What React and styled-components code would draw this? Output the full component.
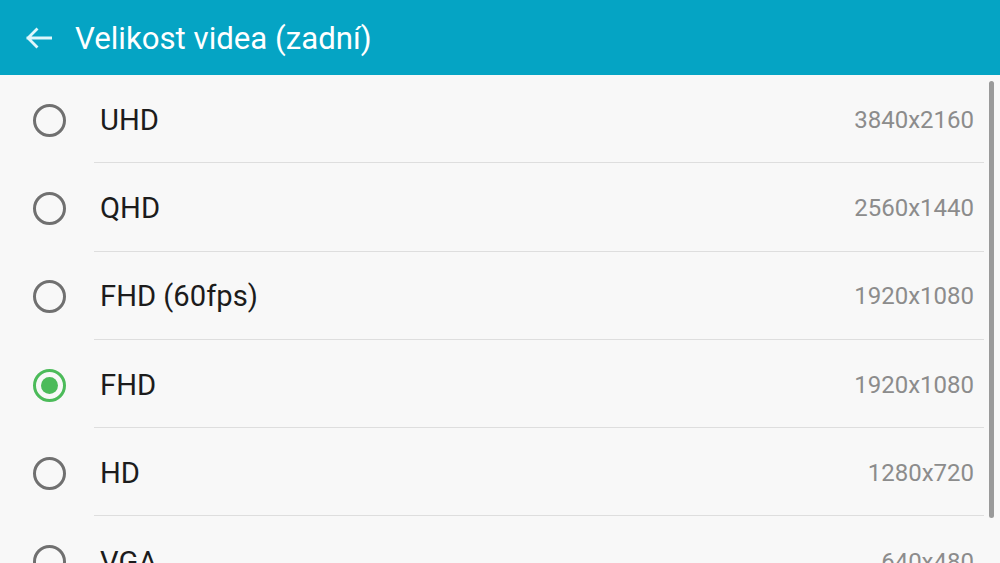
import React from "react";
import styled, { createGlobalStyle } from "styled-components";

const Global = createGlobalStyle`
  html, body { margin: 0; padding: 0; }
  body {
    width: 1000px;
    height: 563px;
    overflow: hidden;
    background: #f8f8f8;
    font-family: Roboto, "Noto Sans", sans-serif;
  }
`;

const Screen = styled.div`
  position: relative;
  width: 1000px;
  height: 563px;
  overflow: hidden;
  background: #f8f8f8;
  display: flex;
  flex-direction: column;
`;

const Header = styled.header`
  height: 75px;
  flex: none;
  background: #05a4c4;
  display: flex;
  align-items: center;
  padding-left: 24px;
  box-sizing: border-box;
`;

const BackButton = styled.div`
  width: 28px;
  height: 28px;
  display: flex;
  align-items: center;
  justify-content: center;
  margin-right: 23px;
`;

const Title = styled.h1`
  margin: 0;
  font-size: 31.2px;
  font-weight: 400;
  color: #ffffff;
  margin-top: 2px;
`;

const List = styled.div`
  display: flex;
  flex-direction: column;
`;

const Row = styled.div`
  height: 88.3px;
  display: flex;
  align-items: stretch;
  padding-right: 16px;
  box-sizing: border-box;
  flex: none;
`;

const RadioCell = styled.div`
  width: 94px;
  flex: none;
  display: flex;
  align-items: center;
  padding-left: 33px;
  box-sizing: border-box;
  padding-top: 2px;
`;

const Radio = styled.div`
  width: 33px;
  height: 33px;
  box-sizing: border-box;
  border-radius: 50%;
  border: 3px solid ${(p) => (p.$checked ? "#4cbb5a" : "#707070")};
  display: flex;
  align-items: center;
  justify-content: center;
  &::after {
    content: "";
    display: ${(p) => (p.$checked ? "block" : "none")};
    width: 17px;
    height: 17px;
    border-radius: 50%;
    background: #4cbb5a;
  }
`;

const Body = styled.div`
  flex: 1;
  display: flex;
  align-items: center;
  justify-content: space-between;
  padding-left: 6px;
  padding-right: 10px;
  border-bottom: ${(p) => (p.$last ? "none" : "1.5px solid #dedede")};
  box-sizing: border-box;
`;

const Label = styled.span`
  font-size: 29.2px;
  color: #1c1c1c;
  margin-top: 2px;
`;

const Value = styled.span`
  font-size: 24px;
  color: #8c8c8c;
  margin-top: 2px;
`;

const Scrollbar = styled.div`
  position: absolute;
  right: 6px;
  top: 81px;
  width: 5px;
  height: 437px;
  border-radius: 3px;
  background: #9a9a9a;
`;

const items = [
  { label: "UHD", value: "3840x2160" },
  { label: "QHD", value: "2560x1440" },
  { label: "FHD (60fps)", value: "1920x1080" },
  { label: "FHD", value: "1920x1080", checked: true },
  { label: "HD", value: "1280x720" },
  { label: "VGA", value: "640x480" },
];

export default function App() {
  return (
    <Screen>
      <Global />
      <Header>
        <BackButton>
          <svg width="27" height="22" viewBox="0 0 27 22" fill="none">
            <path
              d="M26 11H3M11.5 2.5L3 11l8.5 8.5"
              stroke="#dff6fb"
              strokeWidth="2.8"
              strokeLinecap="square"
              strokeLinejoin="miter"
            />
          </svg>
        </BackButton>
        <Title>Velikost videa (zadní)</Title>
      </Header>
      <List>
        {items.map((it, i) => (
          <Row key={i}>
            <RadioCell>
              <Radio $checked={!!it.checked} />
            </RadioCell>
            <Body $last={i === items.length - 1}>
              <Label>{it.label}</Label>
              <Value>{it.value}</Value>
            </Body>
          </Row>
        ))}
      </List>
      <Scrollbar />
    </Screen>
  );
}
